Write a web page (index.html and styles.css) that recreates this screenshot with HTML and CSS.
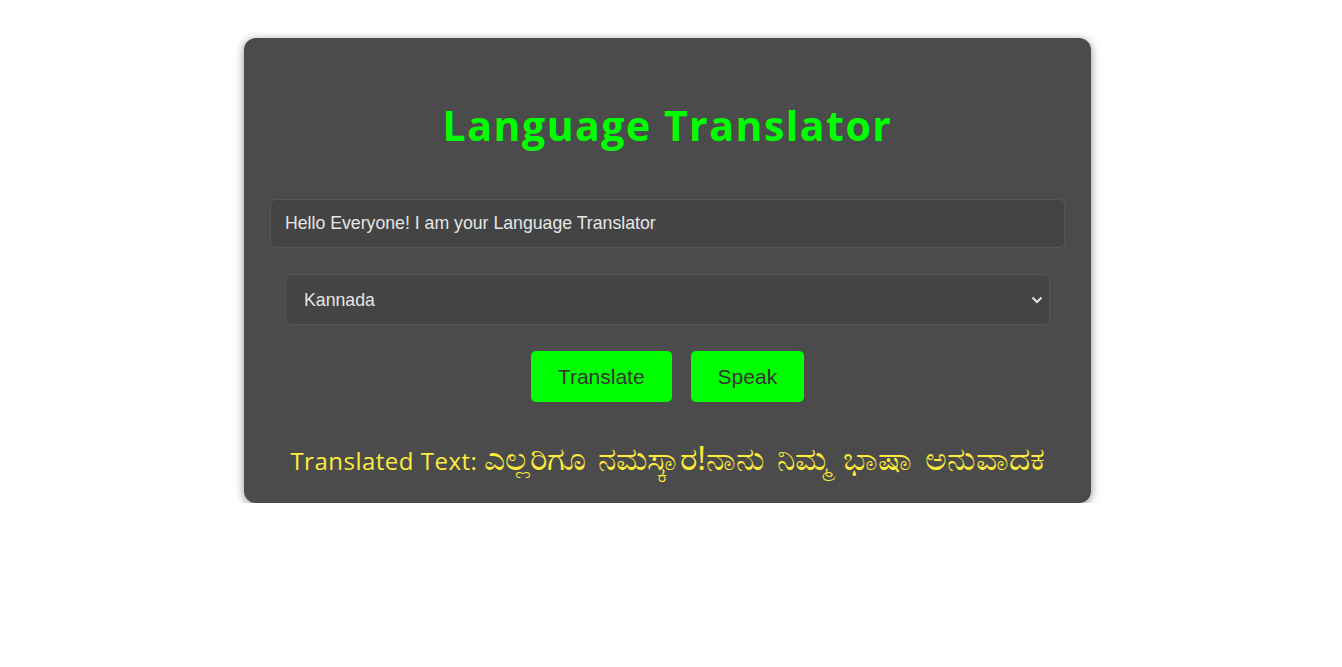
FILE: index.html
```html
<!DOCTYPE html>
<html>
<head>
<meta charset="utf-8">
<link rel="stylesheet" href="styles.css">
</head>
<body>
<div class="card">
  <h1 class="title">Language Translator</h1>
  <input class="text-input" type="text" value="Hello Everyone! I am your Language Translator">
  <div class="select-row">
    <select class="lang-select">
      <option>Kannada</option>
    </select>
  </div>
  <div class="buttons">
    <button class="btn">Translate</button>
    <button class="btn">Speak</button>
  </div>
  <p class="result"><span class="result-label">Translated Text:</span> <span class="result-kn">ಎಲ್ಲರಿಗೂ ನಮಸ್ಕಾರ!ನಾನು ನಿಮ್ಮ ಭಾಷಾ ಅನುವಾದಕ</span></p>
</div>
</body>
</html>
```

FILE: styles.css
```css
html, body {
  margin: 0;
  padding: 0;
  background: #ffffff;
}
body {
  font-family: "Liberation Sans", Arial, sans-serif;
}
.card {
  box-sizing: border-box;
  width: 847px;
  height: 465px;
  margin: 38px 0 0 244px;
  background: #4b4b4b;
  border-radius: 12px;
  box-shadow: 0 2px 10px rgba(0, 0, 0, 0.45);
  padding: 1px 26px 0 26px;
  display: flex;
  flex-direction: column;
}
.title {
  margin: 58px 0 0 0;
  height: 56px;
  line-height: 56px;
  text-align: center;
  color: #00ff00;
  font-family: "Open Sans", sans-serif;
  font-weight: 700;
  font-size: 41px;
  letter-spacing: 1.5px;
}
.text-input {
  box-sizing: border-box;
  margin-top: 46px;
  width: 100%;
  height: 49px;
  background: #444444;
  border: 1px solid #575757;
  border-radius: 6px;
  color: #e6e6e6;
  font-family: "Liberation Sans", Arial, sans-serif;
  font-size: 17.7px;
  padding: 0 14px;
  outline: none;
}
.select-row {
  padding: 0 15px;
  margin-top: 26px;
}
.lang-select {
  box-sizing: border-box;
  width: 100%;
  height: 51px;
  background: #444444;
  border: 1px solid #555555;
  border-radius: 6px;
  color: #e6e6e6;
  font-family: "Liberation Sans", Arial, sans-serif;
  font-size: 17.7px;
  padding: 0 14px 0 18px;
  appearance: none;
  -webkit-appearance: none;
  background-image: url("data:image/svg+xml;utf8,<svg xmlns='http://www.w3.org/2000/svg' width='12' height='8' viewBox='0 0 12 8'><path d='M1.5 1.5 L6 6 L10.5 1.5' fill='none' stroke='%23e6e6e6' stroke-width='2'/></svg>");
  background-repeat: no-repeat;
  background-position: right 6px center;
  outline: none;
}
.buttons {
  display: flex;
  justify-content: center;
  gap: 19px;
  margin-top: 26px;
}
.btn {
  height: 51px;
  background: #00ff00;
  border: none;
  border-radius: 5px;
  color: #333333;
  font-family: "Liberation Sans", Arial, sans-serif;
  font-size: 21px;
  padding: 0 27px;
}
.result {
  margin: 40px 0 0 0;
  text-align: center;
  color: #ffeb3b;
  font-family: "Open Sans", "Noto Sans", sans-serif;
  font-size: 24px;
  line-height: 32px;
  height: 32px;
  white-space: nowrap;
}
.result-label {
  letter-spacing: 0.5px;
}
.result-kn {
  font-size: 33px;
  word-spacing: 4px;
}
```
